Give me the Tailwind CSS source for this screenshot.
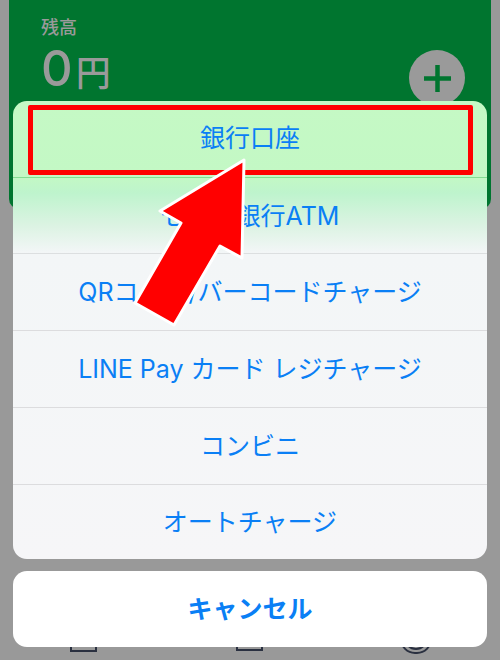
<!DOCTYPE html>
<html lang="ja">
<head>
    <meta charset="UTF-8">
    <title>LINE Pay チャージ</title>
    <script src="https://cdn.jsdelivr.net/npm/@tailwindcss/browser@4"></script>
</head>
<body class="m-0">
<div class="relative w-[500px] h-[660px] overflow-hidden bg-[#999999] font-['Inter','Noto_Sans_CJK_JP',sans-serif]">
    <!-- card behind the sheet -->
    <div class="mx-[9px] h-[209px] rounded-b-[10px] bg-[#00752f] pl-[32px] pr-[26px] pt-[15px] flex justify-between items-start">
        <div class="text-[#9a9a9a]">
            <p class="text-[18px] leading-[26px] font-medium">残高</p>
            <p class="flex items-baseline leading-[56px]">
                <span class="text-[49px] font-medium">0</span><span class="text-[35px] ml-[3px] font-medium">円</span>
            </p>
        </div>
        <div class="mt-[35px] w-[56px] h-[56px] rounded-full bg-[#9a9a9a] flex items-center justify-center">
            <svg width="27" height="27" viewBox="0 0 27 27"><path d="M13.5 0v27M0 13.5h27" stroke="#00752f" stroke-width="4.5"/></svg>
        </div>
    </div>

    <!-- tab bar icons peeking out under cancel -->
    <div class="absolute left-0 right-0 top-[630px] h-[30px]">
        <div class="absolute left-[70px] top-[0px] w-[27px] h-[22px] border-2 border-[#2a3040]"></div>
        <div class="absolute left-[236px] top-[0px] w-[27px] h-[21px] border-2 border-[#2a3040]"></div>
        <div class="absolute left-[400px] top-[-6px] w-[32px] h-[30px] rounded-full border-2 border-[#2a3040]"></div>
        <div class="absolute left-[404px] top-[-6px] w-[24px] h-[26px] rounded-full border-2 border-[#2a3040]"></div>
    </div>

    <!-- action sheet -->
    <div class="absolute left-[13px] top-[101px] w-[474px] flex flex-col gap-[12px]">
        <ul class="h-[458px] rounded-[14px] overflow-hidden bg-[linear-gradient(180deg,#c5f9c5_0px,#c3f8c5_76px,#bef4cd_92px,#dcf3e3_125px,#f3f6f7_152px,#f6f6f8_458px)] text-[#0a7ff5] text-[25px] text-center">
            <li class="h-[77px] leading-[75px] border-b border-[#84dd92]">銀行口座</li>
            <li class="h-[76px] leading-[76px] border-b border-[#dcdfe0]">セブン銀行ATM</li>
            <li class="h-[77px] leading-[76px] border-b border-[#dcdcde]">QRコード/バーコードチャージ</li>
            <li class="h-[77px] leading-[76px] border-b border-[#dcdcde]">LINE Pay カード レジチャージ</li>
            <li class="h-[77px] leading-[76px] border-b border-[#dcdcde]">コンビニ</li>
            <li class="h-[74px] leading-[74px]">オートチャージ</li>
        </ul>
        <button class="h-[76px] rounded-[14px] bg-white text-[#0a7ff5] text-[25px] font-bold leading-[72px] pb-[1px]">キャンセル</button>
    </div>

    <!-- annotation -->
    <div class="absolute left-[28px] top-[105px] w-[445px] h-[70px] rounded-[2px] border-[5px] border-[#ff0000]"></div>
    <svg class="absolute left-0 top-0" width="500" height="660" viewBox="0 0 500 660">
        <path d="M244 160L160 211L181 223L135 303L174 325L220 246L242 258Z" fill="#ff0000" stroke="#ffffff" stroke-width="3" stroke-linejoin="round"/>
    </svg>
</div>
</body>
</html>
